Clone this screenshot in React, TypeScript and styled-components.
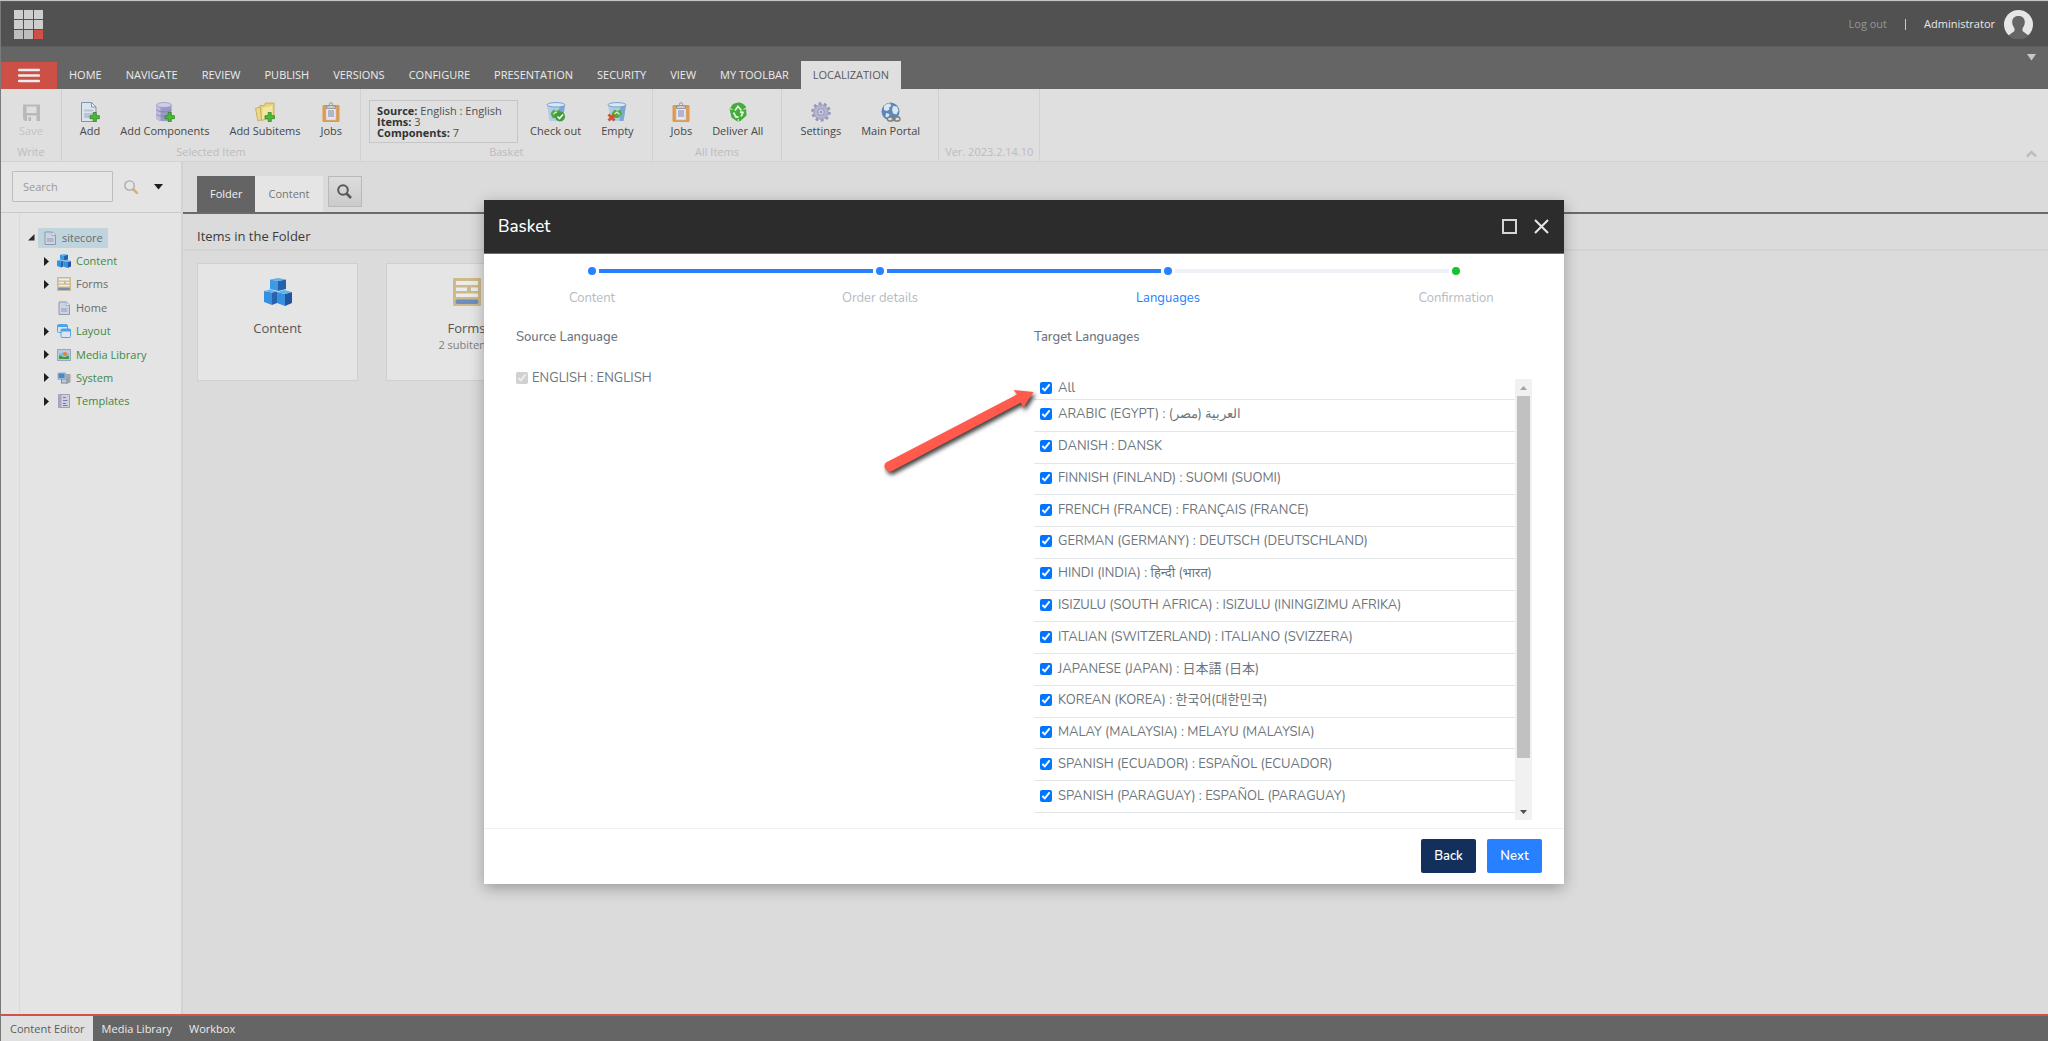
import React from "react";
import styled, { createGlobalStyle, css } from "styled-components";

const UI_FONT = '"Open Sans", "Noto Sans", sans-serif';
const DIALOG_FONT = '"Nunito", "Open Sans", "Noto Sans", "Noto Sans CJK JP", "Noto Sans CJK KR", sans-serif';

const GlobalStyle = createGlobalStyle`
  *, *::before, *::after { box-sizing: border-box; }
  body { margin: 0; font-family: ${UI_FONT}; font-size: 11px; line-height: 16px; color: #474747; }
  button, input { font: inherit; color: inherit; }
  button { border: 0; padding: 0; background: none; cursor: pointer; }
  ul, ol { list-style: none; margin: 0; padding: 0; }
  a { color: inherit; text-decoration: none; }
  h1, h2, h3, p { margin: 0; font-weight: 400; }
  svg { display: block; flex: none; }
`;

/* ---------- page frame ---------- */

const Page = styled.div`
  position: relative;
  min-height: 100vh;
  display: flex;
  flex-direction: column;
  background: #dbdbdb;
  border-top: 1px solid #c4c4c4;
`;

const Frame = styled.div`
  flex: 1;
  display: flex;
  flex-direction: column;
  border-left: 1px solid #7a7a7a;
`;

const TopBar = styled.header`
  height: 45px;
  padding: 0 15px 0 13px;
  display: flex;
  align-items: center;
  justify-content: space-between;
  background: #515151;
  border-top: 1px solid #5c5c5c;
`;

const Account = styled.div`
  display: flex;
  align-items: center;
  color: #e8e8e8;
`;

const LogOut = styled.a`
  color: #959595;
`;

const Divider = styled.span`
  width: 1px;
  height: 11px;
  margin: 0 18px;
  background: #c9c9c9;
`;

const Avatar = styled.span`
  margin-left: 9px;
`;

const TabBar = styled.nav`
  height: 43px;
  padding-right: 12px;
  display: flex;
  align-items: flex-end;
  background: #656565;
  border-top: 1px solid #5f5f5f;
`;

const MenuButton = styled.button`
  width: 56px;
  height: 27px;
  display: flex;
  align-items: center;
  justify-content: center;
  background: #cd5047;
`;

const RibbonTab = styled.button<{ $active?: boolean }>`
  height: 28px;
  padding: 0 12px 1px;
  color: #ececec;
  ${(p) =>
    p.$active &&
    css`
      background: #dfdfdf;
      color: #5a5a5a;
    `}
`;

const CollapseTop = styled.button`
  align-self: flex-start;
  margin-left: auto;
  padding-top: 7px;
`;

/* ---------- ribbon ---------- */

const Ribbon = styled.div`
  height: 73px;
  display: flex;
  background: #dfdfdf;
  border-bottom: 1px solid #d2d2d2;
`;

const Group = styled.section`
  padding: 13px 8px 1px;
  display: flex;
  flex-direction: column;
  justify-content: space-between;
  border-right: 1px solid #d0d0d0;
`;

const GroupItems = styled.div`
  display: flex;
`;

const GroupCaption = styled.h2`
  margin: 0 -2px;
  font-size: 11px;
  text-align: center;
  color: #bcbcbc;
`;

const Tool = styled.button`
  padding: 0 10px;
  display: flex;
  flex-direction: column;
  align-items: center;
  gap: 1px;
  color: #474747;
  &:disabled { color: #c3c3c3; }
`;

const BasketInfo = styled.div`
  width: 149px;
  height: 43px;
  margin: -2px 2px 0 0;
  padding: 4px 7px;
  border: 1px solid #c6c6c6;
  line-height: 11px;
  color: #4f4f4f;
  b { color: #333; font-weight: 700; }
`;

const CollapseRibbon = styled.button`
  align-self: flex-end;
  margin: 0 11px 3px auto;
`;

/* ---------- body ---------- */

const Body = styled.div`
  flex: 1;
  display: flex;
`;

const Sidebar = styled.aside`
  width: 182px;
  display: flex;
  flex-direction: column;
  background: #e4e4e4;
  border-right: 2px solid #d3d3d3;
`;

const SearchBar = styled.div`
  height: 51px;
  padding: 0 11px;
  display: flex;
  align-items: center;
  border-bottom: 1px solid #c9c9c9;
`;

const SearchInput = styled.input`
  width: 101px;
  height: 31px;
  margin: 0 11px 2px 0;
  padding: 0 10px;
  border: 1px solid #bdbdbd;
  border-radius: 1px;
  background: #e6e6e6;
  outline: 0;
  &::placeholder { color: #9a9a9a; opacity: 1; }
`;

const IconButton = styled.button`
  margin-right: 16px;
`;

const TreePane = styled.div`
  flex: 1;
  margin-left: 18px;
  padding-top: 13px;
  border-left: 1px solid #dadada;
`;

const Tree = styled.ul`
  height: 187px;
  display: grid;
  grid-template-rows: repeat(8, 1fr);
`;

const TreeRow = styled.li<{ $depth: number; $system?: boolean }>`
  padding-left: ${(p) => (p.$depth === 0 ? 8 : 24)}px;
  display: flex;
  align-items: center;
  color: ${(p) => (p.$system ? "#3d8a45" : "#6a6a6a")};
`;

const Expander = styled.button<{ $wide?: boolean }>`
  width: ${(p) => (p.$wide ? 10 : 8)}px;
  height: 16px;
  display: flex;
  align-items: center;
`;

const TreeLink = styled.a<{ $selected?: boolean }>`
  height: 20px;
  padding: 0 5px;
  display: flex;
  align-items: center;
  gap: 5px;
  background: ${(p) => (p.$selected ? "#c0d4de" : "transparent")};
`;

const Editor = styled.main`
  flex: 1;
  min-width: 0;
`;

const EditorTabs = styled.div`
  height: 52px;
  padding: 14px 14px 0;
  display: flex;
  border-bottom: 2px solid #6a6a6a;
`;

const EditorTab = styled.button<{ $active?: boolean }>`
  height: 36px;
  padding: 0 13px;
  background: ${(p) => (p.$active ? "#646464" : "#e5e5e5")};
  color: ${(p) => (p.$active ? "#f0f0f0" : "#757575")};
`;

const SearchTab = styled.button`
  width: 34px;
  height: 31px;
  margin-left: 5px;
  display: flex;
  align-items: center;
  justify-content: center;
  border: 1px solid #b9b9b9;
  background: linear-gradient(#dcdcdc, #cbcbcb);
`;

const SectionTitle = styled.h2`
  height: 37px;
  padding: 8px 14px 0;
  display: flex;
  align-items: center;
  border-bottom: 2px solid #d4d4d4;
  font-size: 13px;
  font-weight: 500;
  color: #3c3c3c;
`;

const Cards = styled.ul`
  padding: 12px 14px;
  display: flex;
  gap: 28px;
`;

const Card = styled.li`
  width: 161px;
  height: 118px;
  padding-top: 14px;
  display: flex;
  flex-direction: column;
  align-items: center;
  background: #e5e5e5;
  border: 1px solid #d0d0d0;
  color: #7d7d7d;
`;

const CardTitle = styled.h3`
  margin-top: 13px;
  font-size: 13px;
  line-height: 18px;
  font-weight: 500;
  color: #555;
`;

const StatusBar = styled.footer`
  height: 27px;
  display: flex;
  background: #656565;
  border-top: 2px solid #d2514a;
`;

const AppTab = styled.button<{ $active?: boolean }>`
  padding: 0 8px 0 9px;
  background: ${(p) => (p.$active ? "#e0e0e0" : "transparent")};
  color: ${(p) => (p.$active ? "#5c5c5c" : "#ececec")};
`;

/* ---------- dialog ---------- */

const Backdrop = styled.div`
  position: absolute;
  inset: 0;
  padding-top: 199px;
  display: flex;
  align-items: flex-start;
  justify-content: center;
`;

const Dialog = styled.div`
  position: relative;
  width: 1080px;
  max-width: 94%;
  display: flex;
  flex-direction: column;
  background: #fff;
  box-shadow: 0 4px 14px rgba(0, 0, 0, 0.3);
  font-family: ${DIALOG_FONT};
  font-size: 13px;
  color: #6c757d;
`;

const DialogHeader = styled.header`
  height: 54px;
  padding: 0 15px 0 14px;
  display: flex;
  align-items: center;
  justify-content: space-between;
  background: #2c2c2c;
  border-bottom: 1px solid #6f6f6f;
`;

const DialogTitle = styled.h1`
  font-size: 17px;
  font-weight: 500;
  color: #fff;
`;

const WindowButtons = styled.div`
  display: flex;
  gap: 17px;
`;

const Steps = styled.ol`
  padding: 13px 10% 0;
  display: flex;
  justify-content: space-between;
`;

const Step = styled.li<{ $current?: boolean; $line?: string }>`
  flex: ${(p) => (p.$line ? 1 : "none")};
  width: 0;
  display: flex;
  flex-direction: column;
  align-items: flex-start;
  gap: 13px;
  color: ${(p) => (p.$current ? "#2680ff" : "#b6bcc3")};
`;

const StepTrack = styled.span<{ $tone: string; $line?: string }>`
  width: 100%;
  height: 8px;
  display: flex;
  align-items: center;
  gap: 3px;
  &::before {
    content: "";
    flex: none;
    width: 8px;
    height: 8px;
    margin-left: -4px;
    border-radius: 50%;
    background: ${(p) => p.$tone};
  }
  &::after {
    content: "";
    flex: 1;
    height: 4px;
    margin-right: 7px;
    background: ${(p) => p.$line || "transparent"};
  }
`;

const StepLabel = styled.span`
  width: 120px;
  margin-left: -60px;
  line-height: 20px;
  text-align: center;
`;

const Columns = styled.div`
  padding: 19px 32px 8px;
  display: grid;
  grid-template-columns: 518px 1fr;
`;

const ColumnTitle = styled.h2`
  font-size: 13px;
  line-height: 20px;
  font-weight: 500;
`;

const SourceLabel = styled.label`
  margin-top: 21px;
  display: inline-flex;
  align-items: center;
  gap: 4px;
  line-height: 20px;
`;

const Check = styled.input`
  width: 12px;
  height: 12px;
  margin: 0;
  accent-color: #0075ff;
`;

const TargetPane = styled.div`
  height: 441px;
  margin-top: 32px;
  display: flex;
`;

const Languages = styled.ul`
  flex: 1;
  padding-bottom: 7px;
  display: grid;
  grid-template-rows: 21px repeat(13, 1fr);
`;

const LanguageRow = styled.li`
  display: flex;
  border-bottom: 1px solid #e3e6e9;
  label {
    padding: 0 6px 2px;
    display: flex;
    align-items: center;
    gap: 6px;
  }
`;

const Scrollbar = styled.div`
  width: 17px;
  display: flex;
  flex-direction: column;
  align-items: center;
  background: #f1f1f1;
`;

const ScrollArrow = styled.button`
  height: 17px;
  display: flex;
  align-items: center;
`;

const ScrollTrack = styled.div`
  flex: 1;
  width: 13px;
`;

const ScrollThumb = styled.div`
  height: 89%;
  background: #c1c1c1;
`;

const DialogFooter = styled.footer`
  padding: 10px 22px 11px;
  display: flex;
  justify-content: flex-end;
  gap: 11px;
  border-top: 1px solid #edf0f4;
`;

const ActionButton = styled.button<{ $primary?: boolean }>`
  width: 55px;
  height: 34px;
  border-radius: 2px;
  background: ${(p) => (p.$primary ? "#2680ff" : "#13305c")};
  color: #fff;
  font-weight: 600;
`;

const Pointer = styled.svg`
  position: absolute;
  left: 396px;
  top: 182px;
  filter: drop-shadow(2px 3px 2px rgba(0, 0, 0, 0.75));
`;

/* ---------- icons ---------- */

const Plus = () => (
  <path d="M13.2 10.500h3v3.200h3.200v3h-3.200v3.200h-3v-3.200H10v-3h3.200z" fill="#4fb83a" stroke="#2c8a22" strokeWidth=".8" />
);

const Sheet = () => (
  <>
    <path d="M1.500.5h10l4.500 4.500v14.500H1.500z" fill="#dbe3ee" stroke="#8193b3" />
    <path d="M11.500 .5V5H16z" fill="#f4f6fa" stroke="#8193b3" />
    <path d="M4 7.500h9v2H4zM4 11h9v5H4z" fill="#b9c3d4" />
  </>
);

const Clipboard = () => (
  <>
    <rect x="1.500" y="3" width="17" height="17" rx="1" fill="#dd9b50" />
    <path d="M5 5h10v13H5z" fill="#e6e6ec" stroke="#c9c0b6" strokeWidth=".6" />
    <path d="M7 8h6v7H7z" fill="#b3b3d0" />
    <path d="M5.500 6.500V4H8a2.200 2.200 0 0 1 4 0h2.500v2.500z" fill="#cfcfcf" stroke="#868686" strokeWidth=".8" />
    <circle cx="10" cy="2.200" r="1.500" fill="#e6e6e6" stroke="#8f8f8f" strokeWidth=".9" />
  </>
);

const Bin = () => (
  <>
    <path d="M1 2.500 3.500 19h13L19 2.500z" fill="#b3cbe4" />
    <path d="M13.500 3.500 12.500 19h4l2.500-15.500z" fill="#7fa6d3" />
    <ellipse cx="10" cy="2.800" rx="9" ry="2.200" fill="#dbe7f3" stroke="#6d9bcf" strokeWidth=".9" />
    <path d="M4.500 11.500 7.500 7.500l2.500 1.500 3.500-1.500 1.500 4.500-3.500 4H6.500z" fill="#4fae42" />
    <path d="M7.500 12l2.500-2 2.500 2.500" stroke="#d8efd3" strokeWidth="1.200" fill="none" />
  </>
);

const toolIcons: Record<string, React.ReactNode> = {
  save: (
    <>
      <path d="M2 2.500h17V19H4l-2-2z" fill="#b9b9b9" />
      <path d="M5.500 4.500h10V11h-10zM6 13.500h9.500V19H6z" fill="#dfdfdf" />
      <path d="M7.500 15h2.500v4H7.500z" fill="#b9b9b9" />
    </>
  ),
  add: (
    <>
      <Sheet />
      <Plus />
    </>
  ),
  components: (
    <>
      <path d="M1.500 3v13.500c0 3.500 15 3.500 15 0V3z" fill="#9a9ac6" />
      <path d="M1.500 3v13.500c0 1 1.500 1.800 4 2.200V3z" fill="#bcbcdc" />
      <path d="M1.500 7.500c0 3 15 3 15 0M1.500 12c0 3 15 3 15 0" fill="none" stroke="#8080b2" strokeWidth=".8" />
      <ellipse cx="9" cy="3" rx="7.500" ry="2.500" fill="#cdcde6" stroke="#9393bf" strokeWidth=".7" />
      <Plus />
    </>
  ),
  subitems: (
    <>
      <path d="M.5 6.500 6 4.500l1 13-4 1.500z" fill="#ecd98a" stroke="#bfa64d" strokeWidth=".8" />
      <path d="M5 3.500h4l1.500-2.500h8.500V15L6.500 18.500z" fill="#e9d372" stroke="#bfa64d" strokeWidth=".8" />
      <path d="M7.500 6 17.500 3.500v10.500L7 17.500z" fill="#f1e6a6" />
      <Plus />
    </>
  ),
  jobs: <Clipboard />,
  checkout: (
    <>
      <Bin />
      <circle cx="14" cy="14.500" r="5" fill="#3d9e37" />
      <path d="M11.500 14.500l2 2 3.500-4" fill="none" stroke="#fff" strokeWidth="1.600" />
    </>
  ),
  empty: (
    <>
      <Bin />
      <path d="M1.500 12.500l6 6M7.500 12.500l-6 6" stroke="#d8502f" strokeWidth="2.800" />
    </>
  ),
  deliver: (
    <>
      <path d="M10 .5c4 0 6 1.500 8 4.500l.5 8.500L13 18.500l-3 1.500-6.500-4.500L1.500 7 5 2z" fill="#43ad3b" />
      <path d="M7 8.500 10 4.500l3.500 4M5.500 10.500l2.500 4.500h2.500M13 14.500l2-4-3-.5" fill="none" stroke="#e0f1dd" strokeWidth="1.800" />
      <path d="M1 6.500l3.500 1M19 6l-3.500 1.500M10 20l.5-3" stroke="#dfdfdf" strokeWidth="1.200" />
    </>
  ),
  settings: (
    <>
      <circle cx="10" cy="10" r="8.300" fill="none" stroke="#9898bd" strokeWidth="3" strokeDasharray="2.800 2.415" />
      <circle cx="10" cy="10" r="7.300" fill="#b4b4d0" stroke="#9696bb" strokeWidth=".8" />
      <circle cx="10" cy="10" r="3.200" fill="#d5d5e4" stroke="#8888b0" strokeWidth=".8" />
      <circle cx="10" cy="10" r="1.300" fill="#9292b8" />
    </>
  ),
  portal: (
    <>
      <circle cx="9.500" cy="9.500" r="9" fill="#5a88b8" />
      <path d="M3 4c2-2 4-2.500 6-2.500L10.500 4 8 5.500l.5 2L6 9 3 8zM12 4l4 .5 1.500 4-2 4-3.500-1-1-4zM5 11l3.500 1-1 4.500-3-2z" fill="#dbe6ef" />
      <rect x="6.500" y="15" width="6" height="4" rx="2" fill="#dfdfdf" stroke="#7b7b7b" strokeWidth="1.300" />
      <rect x="13" y="15" width="6" height="4" rx="2" fill="#dfdfdf" stroke="#7b7b7b" strokeWidth="1.300" />
      <path d="M10.500 17h4.500" stroke="#7b7b7b" strokeWidth="1.300" />
    </>
  ),
};

const ToolIcon = ({ name }: { name: string }) => (
  <svg width="20" height="20" viewBox="0 0 20 20" aria-hidden="true">
    {toolIcons[name]}
  </svg>
);

const Cubes = () => (
  <>
    <path d="M6 1.500 14 3v10l-8-2z" fill="#3d9be4" />
    <path d="M14 3l8-1.500V11l-8 2z" fill="#2461ae" />
    <path d="M6 1.500l8-1.500 8 1.500L14 3z" fill="#5fb2ee" />
    <path d="M0 13l8 1.500V27l-8-3z" fill="#3590de" />
    <path d="M8 14.500l5-1V25l-5 2z" fill="#2863b0" />
    <path d="M0 13l6-1.500 7 2-5 1z" fill="#62b3ed" />
    <path d="M13 14l8 2v12l-8-3z" fill="#3590de" />
    <path d="M21 16l7-2v11l-7 3z" fill="#2354a0" />
    <path d="M13 14l7-2 8 2-7 2z" fill="#62b3ed" />
  </>
);

const FormGlyph = () => (
  <>
    <rect width="28" height="28" rx="1" fill="#cdba8b" />
    <path d="M3 3h22v4H3zM3 9.500h11V13H3zM18 9.500h7V13h-7zM3 15.500h22V19H3z" fill="#ececec" />
    <rect x="2.500" y="21.500" width="23" height="4.500" rx="2" fill="#6c8ec0" />
  </>
);

const itemGlyphs: Record<string, React.ReactNode> = {
  page: (
    <>
      <path d="M4 2h15l6 6v19H4z" fill="#ccd4e2" stroke="#8e99ad" strokeWidth="2" />
      <path d="M18 2v7h7" fill="#f2f4f8" stroke="#8e99ad" strokeWidth="1.500" />
      <path d="M8 14h13v8H8z" fill="#aeb8ca" />
    </>
  ),
  cubes: <Cubes />,
  form: <FormGlyph />,
  layout: (
    <>
      <rect x="1" y="1" width="20" height="16" rx="2" fill="#d7e5f3" stroke="#55a5e3" strokeWidth="2" />
      <path d="M1 2h20v4H1z" fill="#4ba2e6" />
      <rect x="8" y="10" width="19" height="17" rx="2" fill="#dde4f2" stroke="#55a5e3" strokeWidth="2" />
      <path d="M8 10h19v5H8z" fill="#4ba2e6" />
    </>
  ),
  media: (
    <>
      <rect x="1" y="3" width="26" height="22" fill="#b9cbe0" stroke="#93a7bf" strokeWidth="2" />
      <path d="M4 12c6-4 14-4 20 0v4H4z" fill="#8fb6df" />
      <circle cx="16" cy="12" r="4" fill="#ea7d38" />
      <path d="M4 15c5 0 7 3 10 3s6-3 10-2v6H4z" fill="#3e9a3c" />
    </>
  ),
  system: (
    <>
      <rect x="1" y="3" width="17" height="15" rx="1" fill="#9db6d4" />
      <rect x="3" y="5" width="12" height="9" fill="#4f86c6" />
      <path d="M18 6h9v17l-9 3z" fill="#a5a5ae" />
      <path d="M8 16h13v9H8z" fill="#8b8b95" />
      <rect x="10" y="17" width="9" height="6" fill="#b9c9df" />
    </>
  ),
  template: (
    <>
      <path d="M3 1h22v26H3z" fill="#d0cfdf" stroke="#a09fb8" strokeWidth="2" />
      <path d="M3 1h6v26H3z" fill="#a8a7c4" />
      <path d="M12 7h6M12 13h9M12 19h6M12 23h9" stroke="#7b7aa0" strokeWidth="2" />
    </>
  ),
};

const ItemIcon = ({ name, size }: { name: string; size: number }) => (
  <svg width={size} height={size} viewBox="0 0 28 28" aria-hidden="true">
    {itemGlyphs[name]}
  </svg>
);

/* ---------- data ---------- */

const ribbonTabs = [
  "HOME", "NAVIGATE", "REVIEW", "PUBLISH", "VERSIONS", "CONFIGURE",
  "PRESENTATION", "SECURITY", "VIEW", "MY TOOLBAR", "LOCALIZATION",
];

const treeItems = [
  { label: "Content", icon: "cubes", system: true, open: true },
  { label: "Forms", icon: "form", system: false, open: true },
  { label: "Home", icon: "page", system: false, open: false },
  { label: "Layout", icon: "layout", system: true, open: true },
  { label: "Media Library", icon: "media", system: true, open: true },
  { label: "System", icon: "system", system: true, open: true },
  { label: "Templates", icon: "template", system: true, open: true },
];

const languages = [
  "All",
  "ARABIC (EGYPT) : العربية (مصر)",
  "DANISH : DANSK",
  "FINNISH (FINLAND) : SUOMI (SUOMI)",
  "FRENCH (FRANCE) : FRANÇAIS (FRANCE)",
  "GERMAN (GERMANY) : DEUTSCH (DEUTSCHLAND)",
  "HINDI (INDIA) : हिन्दी (भारत)",
  "ISIZULU (SOUTH AFRICA) : ISIZULU (ININGIZIMU AFRIKA)",
  "ITALIAN (SWITZERLAND) : ITALIANO (SVIZZERA)",
  "JAPANESE (JAPAN) : 日本語 (日本)",
  "KOREAN (KOREA) : 한국어(대한민국)",
  "MALAY (MALAYSIA) : MELAYU (MALAYSIA)",
  "SPANISH (ECUADOR) : ESPAÑOL (ECUADOR)",
  "SPANISH (PARAGUAY) : ESPAÑOL (PARAGUAY)",
];

const steps = [
  { label: "Content", tone: "#2680ff", line: "#2680ff" },
  { label: "Order details", tone: "#2680ff", line: "#2680ff" },
  { label: "Languages", tone: "#2680ff", line: "#eef2f8", current: true },
  { label: "Confirmation", tone: "#16c22e" },
];

const RibbonTool = ({ icon, label, disabled }: { icon: string; label: string; disabled?: boolean }) => (
  <Tool type="button" disabled={disabled}>
    <ToolIcon name={icon} />
    {label}
  </Tool>
);

export default function App() {
  return (
    <Page>
      <GlobalStyle />
      <Frame>
        <TopBar>
          <a href="#home" aria-label="Launchpad">
            <svg width="29" height="29" viewBox="0 0 29 29" aria-hidden="true">
              {[0, 10, 20].map((y) =>
                [0, 10, 20].map((x) => (
                  <rect key={`${x}-${y}`} x={x} y={y} width="9" height="9" fill={x + y === 40 ? "#cf5047" : y === 20 ? "#bdbdbd" : "#cecece"} />
                ))
              )}
            </svg>
          </a>
          <Account>
            <LogOut href="#logout">Log out</LogOut>
            <Divider />
            Administrator
            <Avatar>
              <svg width="29" height="29" viewBox="0 0 29 29" aria-hidden="true">
                <circle cx="14.500" cy="14.500" r="14.500" fill="#e6e6e6" />
                <path d="M14.500 6c4.500 0 6.500 3 6.300 6.500-.2 3-1.500 4.500-2.300 6v2.500l6 4.500a14.500 14.500 0 0 1-20 0l6-4.500v-2.500c-.8-1.500-2.100-3-2.300-6C8 9 10 6 14.500 6z" fill="#656565" />
              </svg>
            </Avatar>
          </Account>
        </TopBar>

        <TabBar>
          <MenuButton type="button" aria-label="Menu">
            <svg width="22" height="15" viewBox="0 0 22 15" aria-hidden="true">
              <path d="M1 2h20M1 7.500h20M1 13h20" stroke="#ececec" strokeWidth="2.500" strokeLinecap="round" />
            </svg>
          </MenuButton>
          {ribbonTabs.map((tab) => (
            <RibbonTab key={tab} type="button" $active={tab === "LOCALIZATION"}>
              {tab}
            </RibbonTab>
          ))}
          <CollapseTop type="button" aria-label="Toggle header">
            <svg width="9" height="7" viewBox="0 0 9 7"><path d="M0 0h9L4.500 6.500z" fill="#c8c8c8" /></svg>
          </CollapseTop>
        </TabBar>

        <Ribbon>
          <Group>
            <GroupItems><RibbonTool icon="save" label="Save" disabled /></GroupItems>
            <GroupCaption>Write</GroupCaption>
          </Group>
          <Group>
            <GroupItems>
              <RibbonTool icon="add" label="Add" />
              <RibbonTool icon="components" label="Add Components" />
              <RibbonTool icon="subitems" label="Add Subitems" />
              <RibbonTool icon="jobs" label="Jobs" />
            </GroupItems>
            <GroupCaption>Selected Item</GroupCaption>
          </Group>
          <Group>
            <GroupItems>
              <BasketInfo>
                <div><b>Source:</b> English : English</div>
                <div><b>Items:</b> 3</div>
                <div><b>Components:</b> 7</div>
              </BasketInfo>
              <RibbonTool icon="checkout" label="Check out" />
              <RibbonTool icon="empty" label="Empty" />
            </GroupItems>
            <GroupCaption>Basket</GroupCaption>
          </Group>
          <Group>
            <GroupItems>
              <RibbonTool icon="jobs" label="Jobs" />
              <RibbonTool icon="deliver" label="Deliver All" />
            </GroupItems>
            <GroupCaption>All Items</GroupCaption>
          </Group>
          <Group>
            <GroupItems>
              <RibbonTool icon="settings" label="Settings" />
              <RibbonTool icon="portal" label="Main Portal" />
            </GroupItems>
          </Group>
          <Group>
            <GroupItems />
            <GroupCaption>Ver. 2023.2.14.10</GroupCaption>
          </Group>
          <CollapseRibbon type="button" aria-label="Collapse ribbon">
            <svg width="11" height="8" viewBox="0 0 11 8"><path d="M1 6.500 5.500 2 10 6.500" fill="none" stroke="#bdbdbd" strokeWidth="2.500" /></svg>
          </CollapseRibbon>
        </Ribbon>

        <Body>
          <Sidebar>
            <SearchBar>
              <SearchInput type="text" placeholder="Search" aria-label="Search" />
              <IconButton type="button" aria-label="Run search">
                <svg width="14" height="14" viewBox="0 0 14 14">
                  <path d="M9 9l4 4" stroke="#d9b268" strokeWidth="2.500" strokeLinecap="round" />
                  <circle cx="5.500" cy="5.500" r="4.700" fill="#e6e6e6" stroke="#a8a8a8" strokeWidth="1.300" />
                </svg>
              </IconButton>
              <IconButton type="button" aria-label="Search options">
                <svg width="9" height="6" viewBox="0 0 9 6"><path d="M0 0h9L4.500 5.500z" fill="#1f1f1f" /></svg>
              </IconButton>
            </SearchBar>
            <TreePane>
              <Tree>
                <TreeRow $depth={0}>
                  <Expander type="button" $wide aria-label="Collapse sitecore">
                    <svg width="7" height="7" viewBox="0 0 7 7"><path d="M6.500 0v6.500H0z" fill="#2a2a2a" /></svg>
                  </Expander>
                  <TreeLink href="#sitecore" $selected>
                    <ItemIcon name="page" size={14} />
                    sitecore
                  </TreeLink>
                </TreeRow>
                {treeItems.map((item) => (
                  <TreeRow key={item.label} $depth={1} $system={item.system}>
                    {item.open ? (
                      <Expander type="button" aria-label={`Expand ${item.label}`}>
                        <svg width="5" height="9" viewBox="0 0 5 9"><path d="M0 0l5 4.500L0 9z" fill="#1f1f1f" /></svg>
                      </Expander>
                    ) : (
                      <Expander as="span" />
                    )}
                    <TreeLink href={`#${item.label}`}>
                      <ItemIcon name={item.icon} size={14} />
                      {item.label}
                    </TreeLink>
                  </TreeRow>
                ))}
              </Tree>
            </TreePane>
          </Sidebar>

          <Editor>
            <EditorTabs>
              <EditorTab type="button" $active>Folder</EditorTab>
              <EditorTab type="button">Content</EditorTab>
              <SearchTab type="button" aria-label="Search in folder">
                <svg width="15" height="15" viewBox="0 0 15 15">
                  <circle cx="6" cy="6" r="4.800" fill="none" stroke="#585858" strokeWidth="2" />
                  <path d="M9.500 9.500 14 14" stroke="#585858" strokeWidth="2.600" />
                </svg>
              </SearchTab>
            </EditorTabs>
            <SectionTitle>Items in the Folder</SectionTitle>
            <Cards>
              <Card>
                <ItemIcon name="cubes" size={28} />
                <CardTitle>Content</CardTitle>
              </Card>
              <Card>
                <ItemIcon name="form" size={28} />
                <CardTitle>Forms</CardTitle>
                <p>2 subitems</p>
              </Card>
            </Cards>
          </Editor>
        </Body>

        <StatusBar>
          <AppTab type="button" $active>Content Editor</AppTab>
          <AppTab type="button">Media Library</AppTab>
          <AppTab type="button">Workbox</AppTab>
        </StatusBar>
      </Frame>

      <Backdrop>
        <Dialog role="dialog" aria-labelledby="dialog-title">
          <DialogHeader>
            <DialogTitle id="dialog-title">Basket</DialogTitle>
            <WindowButtons>
              <button type="button" aria-label="Maximize">
                <svg width="15" height="15" viewBox="0 0 15 15"><path d="M1 1h13v13H1z" fill="none" stroke="#d6d6d6" strokeWidth="2" /></svg>
              </button>
              <button type="button" aria-label="Close">
                <svg width="15" height="15" viewBox="0 0 15 15"><path d="M1 1l13 13M14 1 1 14" stroke="#e8e8e8" strokeWidth="2" /></svg>
              </button>
            </WindowButtons>
          </DialogHeader>

          <Steps>
            {steps.map((s) => (
              <Step key={s.label} $line={s.line} $current={s.current}>
                <StepTrack $tone={s.tone} $line={s.line} />
                <StepLabel>{s.label}</StepLabel>
              </Step>
            ))}
          </Steps>

          <Columns>
            <section>
              <ColumnTitle>Source Language</ColumnTitle>
              <SourceLabel>
                <Check type="checkbox" defaultChecked disabled />
                ENGLISH : ENGLISH
              </SourceLabel>
            </section>
            <section>
              <ColumnTitle>Target Languages</ColumnTitle>
              <TargetPane>
                <Languages>
                  {languages.map((name) => (
                    <LanguageRow key={name}>
                      <label>
                        <Check type="checkbox" defaultChecked />
                        {name}
                      </label>
                    </LanguageRow>
                  ))}
                </Languages>
                <Scrollbar>
                  <ScrollArrow type="button" aria-label="Scroll up">
                    <svg width="7" height="4" viewBox="0 0 7 4"><path d="M0 4h7L3.500 0z" fill="#a3a3a3" /></svg>
                  </ScrollArrow>
                  <ScrollTrack><ScrollThumb /></ScrollTrack>
                  <ScrollArrow type="button" aria-label="Scroll down">
                    <svg width="7" height="4" viewBox="0 0 7 4"><path d="M0 0h7L3.500 4z" fill="#505050" /></svg>
                  </ScrollArrow>
                </Scrollbar>
              </TargetPane>
            </section>
          </Columns>

          <DialogFooter>
            <ActionButton type="button">Back</ActionButton>
            <ActionButton type="button" $primary>Next</ActionButton>
          </DialogFooter>

          <Pointer width="160" height="100" viewBox="0 0 160 100" aria-hidden="true">
            <path d="M133.500 8l20 2-10.500 16-2-5.500L12 89a5.300 5.300 0 0 1-6-8.500L137 12.500z" fill="#ff5a4b" />
          </Pointer>
        </Dialog>
      </Backdrop>
    </Page>
  );
}
